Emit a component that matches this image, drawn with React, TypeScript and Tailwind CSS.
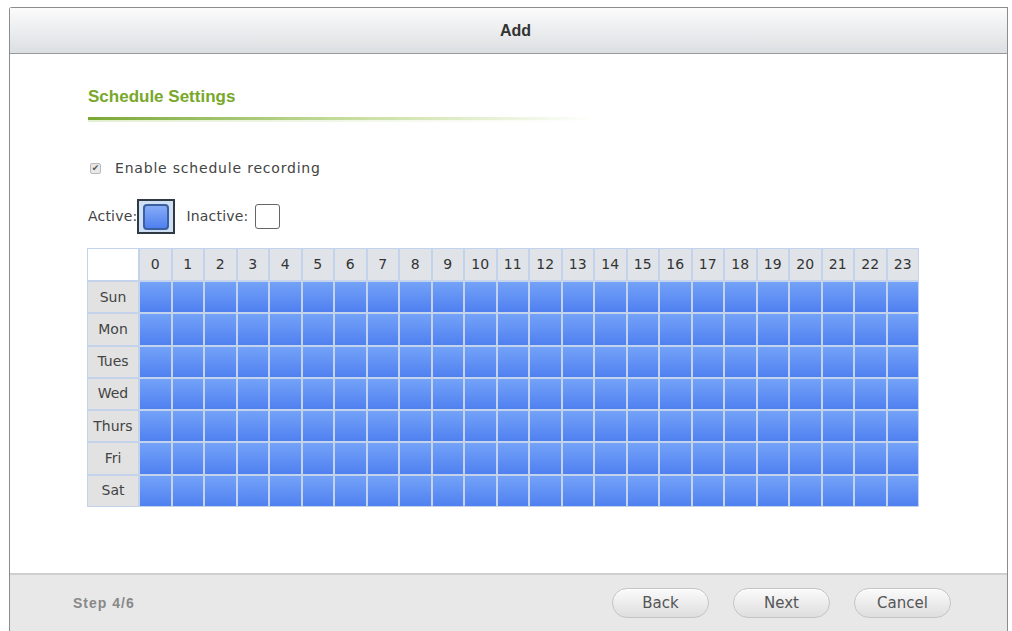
const HOURS = Array.from({ length: 24 }, (_, i) => i);
const DAYS = ['Sun', 'Mon', 'Tues', 'Wed', 'Thurs', 'Fri', 'Sat'];

function ScheduleGrid() {
  return (
    <div className="grid h-[259px] w-[832px] grid-cols-[50px_repeat(24,1fr)] grid-rows-[31px_repeat(7,1fr)] gap-[2px] bg-[#c3d3ec] p-[1px]">
      <div className="bg-white" />
      {HOURS.map((h) => (
        <div
          key={h}
          className="flex items-center justify-center bg-[#e0e3e8] text-[14px] text-[#333]"
        >
          {h}
        </div>
      ))}
      {DAYS.map((day) => (
        <>
          <div
            key={day}
            className="flex items-center justify-center bg-[#e2e2e2] text-[14px] text-[#444]"
          >
            {day}
          </div>
          {HOURS.map((h) => (
            <div
              key={`${day}-${h}`}
              className="bg-gradient-to-b from-[#74a2f8] to-[#4f80f0]"
            />
          ))}
        </>
      ))}
    </div>
  );
}

function FooterButton({ label }: { label: string }) {
  return (
    <button className="h-[30px] w-[97px] rounded-full border border-[#c4c4c4] bg-gradient-to-b from-[#fbfbfb] to-[#dedede] text-[15px] text-[#555] shadow-[inset_0_1px_0_#fff]">
      {label}
    </button>
  );
}

export default function App() {
  return (
    <div className="h-[631px] w-[1012px] overflow-hidden bg-white font-['DejaVu_Sans',sans-serif]">
      <div className="ml-[9px] mt-[7px] flex h-[624px] w-[999px] flex-col rounded-tl-[3px] border border-b-0 border-[#8c8c8c]">
        <div className="flex h-[46px] shrink-0 items-center justify-center border-b border-[#9a9a9a] bg-gradient-to-b from-[#fbfbfb] to-[#dcdfe2] pl-[14px] font-['Liberation_Sans',sans-serif] text-[16px] font-bold text-[#333]">
          Add
        </div>

        <div className="flex-1 bg-white pl-[78px]">
          <div className="mt-[32px] font-['Liberation_Sans',sans-serif] text-[17px] font-bold leading-[22px] text-[#77a82a]">
            Schedule Settings
          </div>
          <div className="mt-[9px] h-[3px] w-[505px] bg-gradient-to-r from-[#7aa832] via-[#c4dc9a] to-transparent" />
          <div className="h-[2px] w-[505px] bg-gradient-to-r from-[#e3efd1] to-transparent" />

          <div className="mt-[36px] flex items-center">
            <span className="ml-[2px] flex h-[11px] w-[11px] items-center justify-center rounded-[2px] border border-[#bbb] bg-[#e8e8e8] text-[9px] leading-none text-[#555]">
              ✔
            </span>
            <span className="ml-[14px] text-[14px] tracking-[0.8px] text-[#444]">
              Enable schedule recording
            </span>
          </div>

          <div className="mt-[20px] flex items-center text-[14px] tracking-[0.2px] text-[#444]">
            <span>Active:</span>
            <span className="flex h-[35px] w-[38px] items-center justify-center border-2 border-[#2f3a44] bg-[#cfe0f5]">
              <span className="h-[26px] w-[26px] rounded-[4px] border-2 border-[#3c5fa0] bg-gradient-to-b from-[#86abf6] to-[#4f80ef]" />
            </span>
            <span className="ml-[11px]">Inactive:</span>
            <span className="ml-[6px] h-[25px] w-[25px] rounded-[3px] border border-[#666] bg-white" />
          </div>

          <div className="-ml-[1px] mt-[14px]">
            <ScheduleGrid />
          </div>
        </div>

        <div className="flex h-[58px] shrink-0 items-center border-t-2 border-[#cfcfcf] bg-[#e8e8e8] pl-[63px] pr-[56px]">
          <span className="font-['Liberation_Sans',sans-serif] text-[14px] font-bold tracking-[1px] text-[#888]">
            Step 4/6
          </span>
          <div className="ml-auto flex gap-[24px]">
            <FooterButton label="Back" />
            <FooterButton label="Next" />
            <FooterButton label="Cancel" />
          </div>
        </div>
      </div>
    </div>
  );
}
